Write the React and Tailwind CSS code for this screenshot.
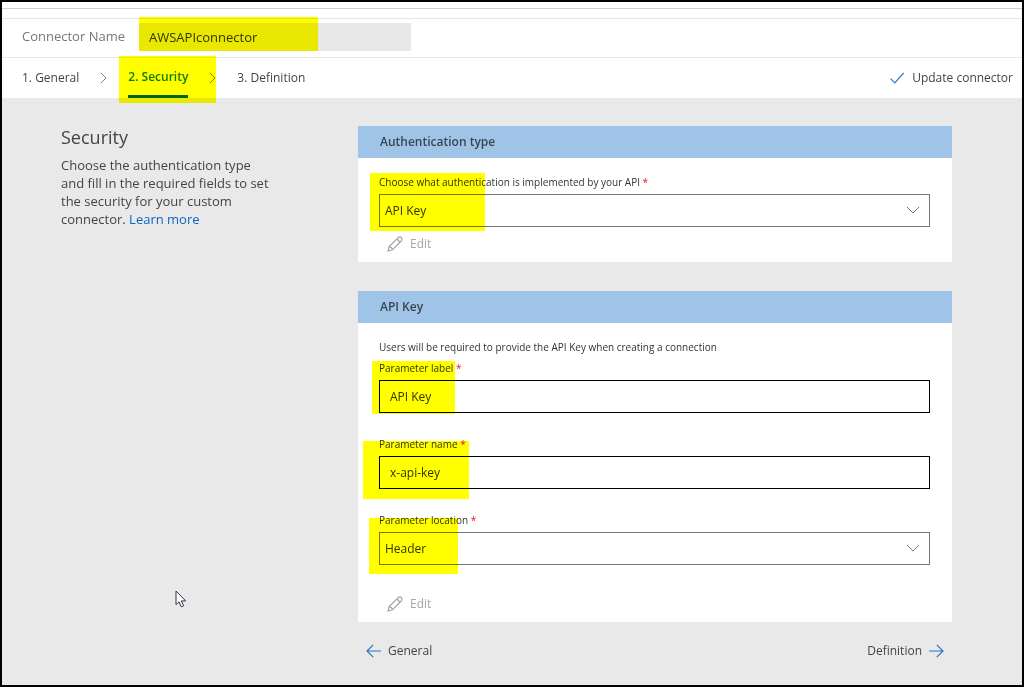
import React, { useState } from "react";

const Highlight = ({ className }) => (
  <span
    aria-hidden="true"
    className={`absolute bg-[#ffff00] mix-blend-multiply pointer-events-none ${className}`}
  />
);

const StepChevron = () => (
  <li aria-hidden="true">
    <svg className="w-[7px] h-3" viewBox="0 0 7 12" fill="none" stroke="#888888">
      <path d="M0.8 0.8L6 6L0.8 11.2" />
    </svg>
  </li>
);

const EditButton = ({ className }) => (
  <button
    type="button"
    disabled
    className={`flex items-center gap-[7px] ml-2 text-[12px] leading-[18px] text-[#a6a6a6] ${className}`}
  >
    <svg className="w-4 h-4" viewBox="0 0 16 16" fill="none" stroke="#a0a0a0" strokeWidth="1.1" aria-hidden="true">
      <path d="M1 15L2.2 10.6L11 1.8C12 0.8 13.4 0.8 14.3 1.7C15.2 2.6 15.2 4 14.2 5L5.4 13.8L1 15Z" />
      <path d="M2.2 10.6C3.8 10.8 5.2 12.2 5.4 13.8M9.8 3L13 6.2" />
    </svg>
    Edit
  </button>
);

const Field = ({ id, label, highlight, className = "", children }) => (
  <div className={`relative ${className}`}>
    <label htmlFor={id} className="block mb-1 text-[10px] leading-4 text-[#333333]">
      {label} <span className="text-[#e81123]">*</span>
    </label>
    {children}
    <Highlight className={highlight} />
  </div>
);

const TextInput = ({ id, value, onChange }) => (
  <input
    id={id}
    type="text"
    value={value}
    onChange={(e) => onChange(e.target.value)}
    className="block w-full h-[33px] px-[10px] border border-black bg-white text-[12px] text-[#333333] focus:outline-none"
  />
);

const Select = ({ id, value, onChange, options }) => (
  <div className="relative">
    <select
      id={id}
      value={value}
      onChange={(e) => onChange(e.target.value)}
      className="block w-full h-[33px] px-[5px] border border-[#767676] bg-white text-[12px] text-[#333333] appearance-none focus:outline-none"
    >
      {options.map((option) => (
        <option key={option}>{option}</option>
      ))}
    </select>
    <svg
      className="absolute right-[10px] top-3 w-[14px] h-2 pointer-events-none"
      viewBox="0 0 14 8"
      fill="none"
      stroke="#777777"
      aria-hidden="true"
    >
      <path d="M1 1L7 7L13 1" />
    </svg>
  </div>
);

const Card = ({ title, children }) => (
  <section className="bg-white">
    <h2 className="h-8 px-[22px] bg-[#a0c4e8] text-[12px] leading-8 font-semibold text-[#3b4550]">
      {title}
    </h2>
    <div className="pl-[21px] pr-[22px] pt-4 pb-[9px]">{children}</div>
  </section>
);

const App = () => {
  const [name, setName] = useState("AWSAPIconnector");
  const [authType, setAuthType] = useState("API Key");
  const [paramLabel, setParamLabel] = useState("API Key");
  const [paramName, setParamName] = useState("x-api-key");
  const [location, setLocation] = useState("Header");

  return (
    <div className="relative min-h-screen flex flex-col border-2 border-black bg-[#e9e9e9] font-['Open_Sans',sans-serif] text-[12px] text-[#444444]">
      <header className="bg-white">
        <div className="h-[7px] border-b border-[#d0d0d0]" />
        <div className="h-[10px] border-b border-[#e6e6e6]" />
        <div className="flex items-center h-[39px] pl-5 pb-[2px] border-b border-[#e9e9e9]">
          <label htmlFor="connector-name" className="w-[117px] text-[13px] text-[#777777]">
            Connector Name
          </label>
          <div className="relative">
            <input
              id="connector-name"
              type="text"
              value={name}
              onChange={(e) => setName(e.target.value)}
              className="block w-[272px] h-7 px-[10px] bg-[#e8e8e8] text-[13px] text-[#333333] focus:outline-none"
            />
            <Highlight className="left-0 -top-[6px] w-[179px] h-[34px]" />
          </div>
        </div>
        <nav className="flex items-center justify-between h-10 pl-5 pr-[9px]">
          <ol className="flex items-center gap-[21px]">
            <li>
              <a href="#general">1. General</a>
            </li>
            <StepChevron />
            <li className="relative">
              <a
                href="#security"
                aria-current="step"
                className="block h-10 border-b-3 border-[#006600] leading-[38px] font-semibold text-[#107c10]"
              >
                2. Security
              </a>
              <Highlight className="-left-[9px] -top-[2px] w-[97px] h-[47px]" />
            </li>
            <StepChevron />
            <li>
              <a href="#definition">3. Definition</a>
            </li>
          </ol>
          <button type="button" className="flex items-center gap-2">
            <svg className="w-[14px] h-3" viewBox="0 0 14 12" fill="none" stroke="#2b7cd3" strokeWidth="1.2" aria-hidden="true">
              <path d="M0.6 6.6L4.8 10.8L13.6 1" />
            </svg>
            Update connector
          </button>
        </nav>
      </header>

      <main className="flex-1 flex pt-7 pb-6 pl-[59px] pr-[70px]">
        <aside className="w-[297px] shrink-0">
          <h1 className="text-lg leading-[22px]">Security</h1>
          <p className="mt-2 w-[214px] text-[13px] leading-[18px]">
            Choose the authentication type and fill in the required fields to set the security for
            your custom connector.{" "}
            <a href="#learn-more" className="text-[#0b66c3]">
              Learn more
            </a>
          </p>
        </aside>

        <div className="flex-1 min-w-0">
          <form className="flex flex-col gap-[29px]" onSubmit={(e) => e.preventDefault()}>
            <Card title="Authentication type">
              <Field
                id="auth-type"
                label="Choose what authentication is implemented by your API"
                highlight="-left-[9px] -top-px w-[115px] h-[58px]"
              >
                <Select
                  id="auth-type"
                  value={authType}
                  onChange={setAuthType}
                  options={["API Key", "No authentication", "Basic authentication", "OAuth 2.0"]}
                />
              </Field>
              <EditButton className="mt-2" />
            </Card>

            <Card title="API Key">
              <p className="mb-[5px] text-[10px] leading-4 text-[#333333]">
                Users will be required to provide the API Key when creating a connection
              </p>
              <Field
                id="param-label"
                label="Parameter label"
                highlight="-left-[7px] top-px w-[83px] h-[53px]"
              >
                <TextInput id="param-label" value={paramLabel} onChange={setParamLabel} />
              </Field>
              <Field
                id="param-name"
                label="Parameter name"
                highlight="-left-4 top-[5px] w-[106px] h-[58px]"
                className="mt-[23px]"
              >
                <TextInput id="param-name" value={paramName} onChange={setParamName} />
              </Field>
              <Field
                id="param-location"
                label="Parameter location"
                highlight="-left-[10px] top-[6px] w-[89px] h-14"
                className="mt-[23px]"
              >
                <Select
                  id="param-location"
                  value={location}
                  onChange={setLocation}
                  options={["Header", "Query"]}
                />
              </Field>
              <EditButton className="mt-[30px]" />
            </Card>
          </form>

          <div className="flex justify-between mt-[19px] px-2 leading-5">
            <a href="#general" className="flex items-center gap-[7px]">
              <svg className="w-[15px] h-[14px]" viewBox="0 0 15 14" fill="none" stroke="#2b72c4" strokeWidth="1.2" aria-hidden="true">
                <path d="M15 7H1M7.2 0.8L1 7L7.2 13.2" />
              </svg>
              General
            </a>
            <a href="#definition" className="flex items-center gap-[7px]">
              Definition
              <svg className="w-[15px] h-[14px]" viewBox="0 0 15 14" fill="none" stroke="#2b72c4" strokeWidth="1.2" aria-hidden="true">
                <path d="M0 7H14M7.8 0.8L14 7L7.8 13.2" />
              </svg>
            </a>
          </div>
        </div>
      </main>

      {/* mouse pointer */}
      <svg
        className="absolute left-[173px] top-[588px] w-3 h-[18px] pointer-events-none"
        viewBox="0 0 12 18"
        fill="white"
        stroke="#333344"
        aria-hidden="true"
      >
        <path d="M1 1V14.6L4 11.8L6.2 16.8L8.6 15.8L6.4 10.9H10.7L1 1Z" />
      </svg>
    </div>
  );
};

export default App;
